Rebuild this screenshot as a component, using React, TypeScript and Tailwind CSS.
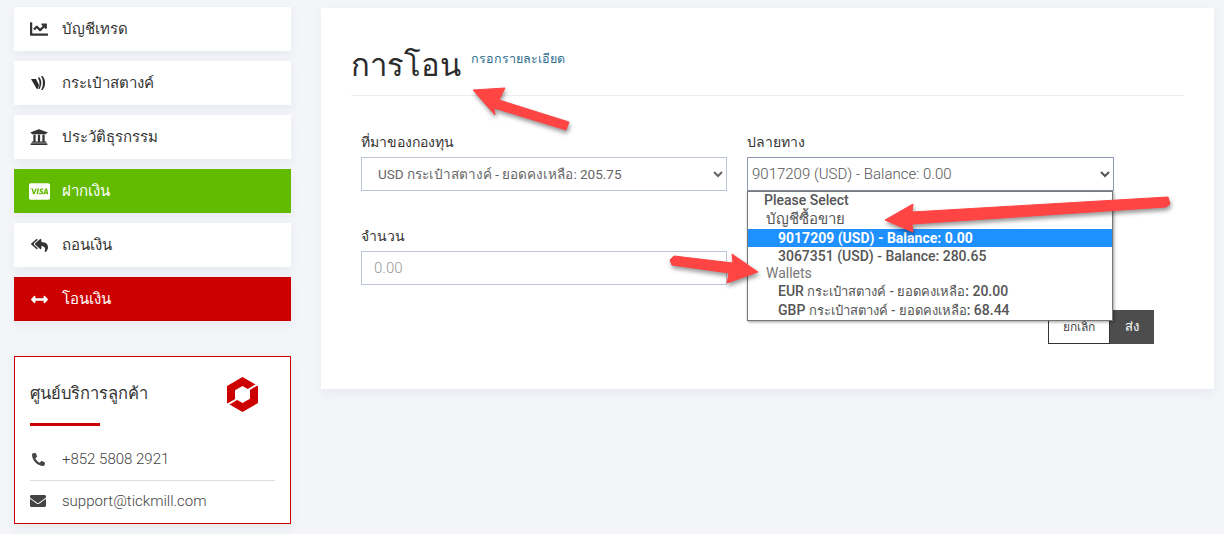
import React from 'react';
import { FaChartLine, FaUniversity, FaCcVisa, FaReplyAll, FaArrowsAltH, FaPhone, FaEnvelope } from 'react-icons/fa';

const WalletIcon = () => (
  <svg viewBox="0 0 18 16" className="h-4 w-[18px]" fill="#2b2b2b">
    <path d="M1 4 L6 4 L9 10 L8 14 L6.5 13.5 Z" />
    <path d="M9 2 C12 5 12 10 9.5 14 L8.5 14 C10 10 10 6 8 3 Z" />
    <path d="M12.5 1 C16 5 16 11 12.5 15 L11 15 C13.6 11 13.6 5 11 1 Z" />
  </svg>
);

const Logo = () => (
  <svg viewBox="0 0 31 35" className="h-[35px] w-[31px]">
    <path fill="#cc0000" d="M15.5 0 L31 9 V26 L15.5 35 L0 26 V9 Z M15.5 9 L8 13.3 V21.7 L15.5 26 L23 21.7 V13.3 Z" fillRule="evenodd" />
    <path stroke="#ffffff" strokeWidth="2" d="M21 13 L31 7 M10 22 L0 28" />
  </svg>
);

const navItems = [
  { label: 'บัญชีเทรด', icon: <FaChartLine size={18} /> },
  { label: 'กระเป๋าสตางค์', icon: <WalletIcon /> },
  { label: 'ประวัติธุรกรรม', icon: <FaUniversity size={18} /> },
  { label: 'ฝากเงิน', icon: <FaCcVisa size={21} />, active: 'bg-[#62bb00] text-white' },
  { label: 'ถอนเงิน', icon: <FaReplyAll size={17} /> },
  { label: 'โอนเงิน', icon: <FaArrowsAltH size={17} />, active: 'bg-[#cc0000] text-white' },
];

const Arrows = () => (
  <svg className="absolute top-0 left-0 z-20 h-[534px] w-[1224px] pointer-events-none drop-shadow-[1px_3px_2px_rgba(0,0,0,0.4)]" viewBox="0 0 1224 534" fill="#ff4444" stroke="#ff4444" strokeLinejoin="round">
    <polygon strokeWidth="1" points="473,90 505,88 499,100 569,122 566,130 494,108 495,115" />
    <polygon strokeWidth="1" points="885,220 913,204 912,212 1168,197 1170,204 1166,207 912,224 913,232" />
    <polygon strokeWidth="1" points="758,272 732,254 733,263 674,256 670,260 672,265 729,273 727,283" />
  </svg>
);

export default function App() {
  return (
    <div className="relative flex h-[534px] w-full overflow-hidden bg-[#f3f5f9] font-['Roboto','Noto_Sans',sans-serif] text-[#333]">
      <aside className="ml-[14px] flex w-[277px] shrink-0 flex-col pt-[7px]">
        <nav className="flex flex-col gap-[10px]">
          {navItems.map((item) => (
            <a key={item.label} className={`flex h-[44px] items-center shadow-[0_4px_10px_rgba(40,50,90,0.06)] ${item.active ?? 'bg-white text-[#333]'}`}>
              <span className="flex w-[48px] justify-center pl-[2px]">{item.icon}</span>
              <span className="text-[15px]">{item.label}</span>
            </a>
          ))}
        </nav>
        <div className="mt-[35px] h-[168px] border border-[#cc0000] bg-white px-[15px] shadow-[0_4px_10px_rgba(40,50,90,0.06)]">
          <div className="flex h-[66px] items-start justify-between pt-[20px] pr-[17px]">
            <h4 className="pt-[5px] text-[16.5px] text-[#333]">ศูนย์บริการลูกค้า</h4>
            <Logo />
          </div>
          <div className="h-[3px] w-[70px] bg-[#cc0000]" />
          <div className="flex h-[55px] items-center border-b border-[#dddddd] pt-[12px] text-[15px] font-light text-[#444]">
            <FaPhone size={13} className="mr-[17px] ml-[2px] scale-x-[-1]" />
            <span>+852 5808 2921</span>
          </div>
          <div className="flex h-[40px] items-center text-[15px] font-light text-[#444]">
            <FaEnvelope size={16} className="mr-[16px]" />
            <span>support@tickmill.com</span>
          </div>
        </div>
      </aside>

      <main className="mt-[8px] ml-[30px] h-[381px] w-[893px] bg-white px-[30px] shadow-[0_4px_10px_rgba(40,50,90,0.06)]">
        <div className="flex h-[88px] items-start border-b border-[#eceef2] pt-[30px]">
          <h1 className="text-[31px] leading-[56px] text-[#2b2b2b]">การโอน</h1>
          <span className="mt-[12px] ml-[10px] text-[12.5px] text-[#2f6f8f]">กรอกรายละเอียด</span>
        </div>

        <div className="mt-[36px] grid grid-cols-[366px_367px] gap-x-[20px] pl-[10px]">
          <div>
            <label className="block text-[14px] leading-[20px] text-[#333]">ที่มาของกองทุน</label>
            <select defaultValue="usd" className="mt-[5px] h-[34px] w-full border border-[#bcc4d8] bg-white pl-[12px] text-[13.5px] text-[#666]">
              <option value="usd">USD กระเป๋าสตางค์ - ยอดคงเหลือ: 205.75</option>
            </select>
          </div>
          <div className="relative">
            <label className="block text-[14px] leading-[20px] text-[#333]">ปลายทาง</label>
            <select defaultValue="a" className="mt-[5px] h-[34px] w-full border border-[#8f98b5] bg-white text-[15px] font-light text-[#555]">
              <option value="a">9017209 (USD) - Balance: 0.00</option>
            </select>
            <div className="absolute top-[59px] left-0 z-10 flex h-[130px] w-[366px] flex-col border border-[#767676] bg-white text-[14px] text-[#555] shadow-[1px_1px_3px_rgba(0,0,0,0.4)]">
              <div className="h-[17px] pl-[16px] leading-[17px] font-medium">Please Select</div>
              <div className="h-[20px] pl-[18px] text-[15px] leading-[20px]">บัญชีซื้อขาย</div>
              <div className="h-[18px] bg-[#1e90ff] pl-[30px] leading-[18px] font-bold text-white">9017209 (USD) - Balance: 0.00</div>
              <div className="h-[18px] pl-[30px] leading-[18px] font-medium">3067351 (USD) - Balance: 280.65</div>
              <div className="h-[18px] pl-[18px] leading-[16px] text-[#777]">Wallets</div>
              <div className="h-[19px] pl-[30px] leading-[19px] font-medium">EUR <span className="text-[13px]">กระเป๋าสตางค์ - ยอดคงเหลือ</span>: 20.00</div>
              <div className="h-[19px] pl-[30px] leading-[19px] font-medium">GBP <span className="text-[13px]">กระเป๋าสตางค์ - ยอดคงเหลือ</span>: 68.44</div>
            </div>
          </div>
        </div>

        <div className="mt-[35px] w-[376px] pl-[10px]">
          <label className="block text-[14px] leading-[20px] text-[#333]">จำนวน</label>
          <input placeholder="0.00" className="mt-[5px] h-[34px] w-[366px] border border-[#bcc4d8] px-[12px] text-[15px] font-light placeholder:text-[#999]" />
        </div>

        <div className="mt-[25px] flex justify-end pr-[30px]">
          <button className="h-[34px] w-[62px] border border-[#333] bg-white text-[12px] text-[#444]">ยกเลิก</button>
          <button className="h-[34px] w-[44px] bg-[#4d4d4d] text-[13px] font-medium text-white">ส่ง</button>
        </div>
      </main>

      <Arrows />
    </div>
  );
}
